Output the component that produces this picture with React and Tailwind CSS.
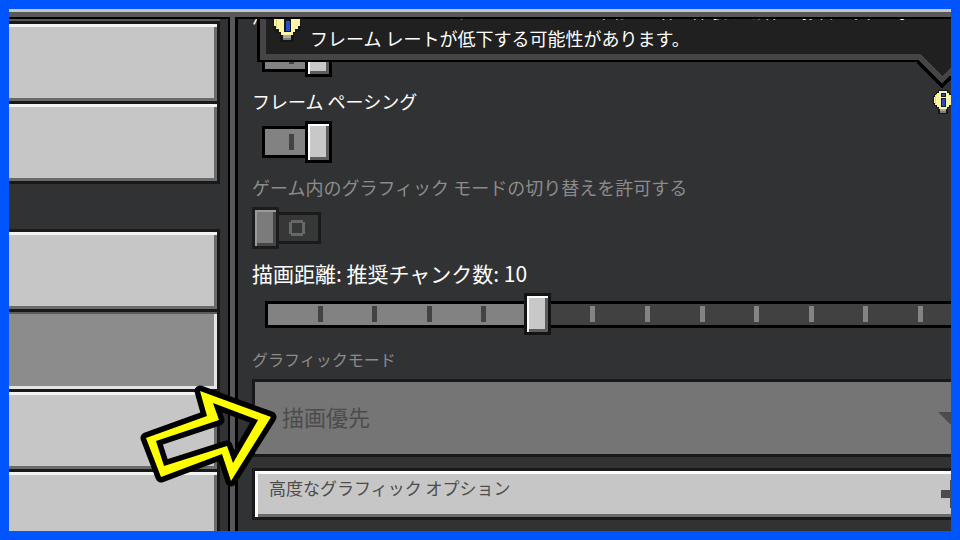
import { useState } from 'react';

const MENU_GROUPS = [
  [
    { id: 'general', selected: false },
    { id: 'account', selected: false },
  ],
  [
    { id: 'controls', selected: false },
    { id: 'video', selected: true },
    { id: 'audio', selected: false },
    { id: 'global', selected: false },
  ],
];

const STEPS = [1, 2, 3, 4, 5, 6, 7, 8, 9, 10, 11, 12];
const CURRENT_STEP = 5;

function BulbIcon({ className, viewBox = '0 0 20 24' }) {
  return (
    <svg viewBox={viewBox} className={className} shapeRendering="crispEdges" aria-hidden="true">
      <path d="M5 0h10v2h2v2h2v2h1v8h-1v2h-2v2h-2v6h-10v-6h-2v-2h-2v-2h-1v-8h1v-2h2v-2h2z" fill="#161616" />
      <path d="M6 1h8v2h2v2h2v2h1v6h-1v2h-2v2h-2v2h-8v-2h-2v-2h-2v-2h-1v-6h1v-2h2v-2h2z" fill="#fdf5a4" />
      <path d="M2 6h1v8h-1zM3 4h1v2h-1z" fill="#dfd67e" />
      <path d="M8 3h5v4h-5zM8 8h5v9h-5z" fill="#14181f" />
      <path d="M9 4h3v2h-3zM9 9h3v7h-3z" fill="#2350c8" />
      <path d="M7 19h6v2h-6z" fill="#a8a8a8" />
      <path d="M7 21h6v2h-6z" fill="#7c7c7c" />
    </svg>
  );
}

function MenuButton({ item }) {
  return (
    <button
      type="button"
      aria-label={item.id}
      className={`block h-20 w-full border-r-[3px] border-b-[3px] border-[#19191a] ${
        item.selected
          ? 'bg-[#8c8c8c] shadow-[inset_0_2px_#5b5b5c,inset_-3px_-3px_#e4e4e5]'
          : 'bg-[#c6c6c6] shadow-[inset_0_3px_#f4f3f4,inset_-3px_-3px_#6b6b6c]'
      }`}
    />
  );
}

function Toggle({ id, defaultChecked = false, disabled = false }) {
  const [on, setOn] = useState(defaultChecked);

  return (
    <div className="relative flex h-[42px] w-20 items-center">
      <input
        id={id}
        type="checkbox"
        checked={on}
        disabled={disabled}
        onChange={(e) => setOn(e.target.checked)}
        className="absolute inset-0 z-10 m-0 h-full w-full opacity-0"
      />
      <span
        className={`ml-[10px] flex h-8 w-[59px] items-center border-[3px] pl-6 ${
          on ? 'border-black bg-[#828282]' : 'border-[#191a19] bg-[#363737]'
        }`}
      >
        {on ? (
          <span className="h-4 w-[5px] bg-[#434343]" />
        ) : (
          <svg viewBox="0 0 16 16" className="h-4 w-4" shapeRendering="crispEdges" aria-hidden="true">
            <path d="M2 0h12v2h2v12h-2v2h-12v-2h-2v-12h2zM3 3v10h10v-10z" fill="#686868" fillRule="evenodd" />
          </svg>
        )}
      </span>
      <span
        className={`absolute top-0 h-[42px] w-[27px] border-[3px] ${
          on
            ? 'left-[53px] border-black bg-[#c8c8c8] shadow-[inset_2px_2px_#fff,inset_-3px_-3px_#5d5d5d]'
            : 'left-0 border-[#1b1c1b] bg-[#7a7b7a] shadow-[inset_2px_2px_#9b9b9b,inset_-3px_-3px_#464646]'
        }`}
      />
    </div>
  );
}

function RenderDistance() {
  return (
    <div className="relative ml-[13px] flex h-[42px] items-center">
      <input
        id="distance"
        type="range"
        min="0"
        max="25"
        defaultValue="10"
        className="absolute inset-0 z-20 m-0 h-full w-full opacity-0"
      />
      <div className="flex h-[27px] flex-1 border-y-[3px] border-l-[3px] border-black bg-[#414141] pr-7">
        {STEPS.map((step) => (
          <div
            key={step}
            className={`flex flex-1 items-center justify-end ${
              step === CURRENT_STEP ? 'relative z-10' : ''
            } ${step <= CURRENT_STEP ? 'bg-[#828282]' : 'bg-[#414141]'}`}
          >
            <span className={`h-4 w-[5px] ${step <= CURRENT_STEP ? 'bg-[#434343]' : 'bg-[#848484]'}`} />
            {step === CURRENT_STEP && (
              <span className="absolute -top-[11px] -right-[10px] h-[42px] w-[27px] border-[3px] border-[#141414] bg-[#c8c8c8] shadow-[inset_2px_2px_#fff,inset_-3px_-3px_#5d5d5d]" />
            )}
          </div>
        ))}
      </div>
    </div>
  );
}

function Tooltip() {
  return (
    <div
      role="tooltip"
      className="absolute -top-[23px] right-0 left-[19px] z-20 border-b-2 border-l-[3px] border-black"
    >
      <div className="flex gap-[9px] border-b-[6px] border-l-[6px] border-[#454546] bg-[#202021] pb-[2px] pl-[7px]">
        <BulbIcon className="mt-3 h-[34px] w-[28px] shrink-0" />
        <p className="text-[18px] leading-[28px] whitespace-nowrap text-white">
          フレーム ペーシングをオンにすると負担が増え体験や動作に影響が出る時
          <br />
          フレーム レートが低下する可能性があります。
        </p>
      </div>
      <svg
        viewBox="0 0 34 35"
        className="absolute top-[58px] right-0 h-[35px] w-[34px]"
        shapeRendering="crispEdges"
        aria-hidden="true"
      >
        <path d="M0 6L25 31L34 22V0H0z" fill="#454546" />
        <path d="M4 0L25 22L34 13V0z" fill="#202021" />
        <path d="M0 7L25 32L34 23" fill="none" stroke="#000" strokeWidth="3" />
      </svg>
    </div>
  );
}

function PointerArrow() {
  return (
    <svg
      viewBox="0 0 140 106"
      className="pointer-events-none absolute top-[373px] left-[129px] z-30 h-[106px] w-[140px]"
      aria-hidden="true"
    >
      <path
        d="M8 56L69 34L62 9L133 35L93 99L84 72L23 95ZM18 59L26 84L89 64L95 81L120 38L75 21L81 38Z"
        fill="#ffff00"
        fillRule="evenodd"
        stroke="#000"
        strokeWidth="11"
        strokeLinejoin="round"
        paintOrder="stroke"
      />
    </svg>
  );
}

export default function App() {
  return (
    <div className="relative flex h-screen flex-col overflow-hidden border-[9px] border-[#0055ff] bg-[#58585a] font-['Noto_Sans_CJK_JP','Noto_Sans',sans-serif]">
      <div className="h-[3px] shrink-0 bg-[#c6c6c6]" />
      <div className="h-[5px] shrink-0 bg-[#58585a]" />

      <div className="flex min-h-0 flex-1 gap-[5px]">
        <nav className="w-[221px] shrink-0 overflow-hidden border-t-2 border-r-2 border-black bg-[#313233] pr-2">
          <div className="h-[2px] bg-[#58585a]" />
          {MENU_GROUPS.map((group) => (
            <div key={group[0].id} className="mb-[45px] border-t-[3px] border-[#19191a]">
              {group.map((item) => (
                <MenuButton key={item.id} item={item} />
              ))}
            </div>
          ))}
        </nav>

        <main className="relative min-w-0 flex-1 overflow-hidden border-t-2 border-l-[3px] border-black bg-[#313233]">
          <Tooltip />

          <div className="-mt-[17px] flex flex-col gap-[11px] pl-[14px]">
            <div className="flex flex-col gap-[7px]">
              <label htmlFor="smooth" className="text-[18px] leading-[26px] text-white">
                滑らかな照明
              </label>
              <Toggle id="smooth" defaultChecked />
            </div>

            <div className="flex flex-col gap-[7px]">
              <div className="flex items-center justify-between">
                <label htmlFor="pacing" className="text-[18px] leading-[26px] text-white">
                  フレーム ペーシング
                </label>
                <BulbIcon viewBox="0 0 18 24" className="mt-[2px] h-6 w-[18px]" />
              </div>
              <Toggle id="pacing" defaultChecked />
            </div>

            <div className="flex flex-col gap-[7px]">
              <label htmlFor="switching" className="text-[18px] leading-[26px] text-[#8c8c8c]">
                ゲーム内のグラフィック モードの切り替えを許可する
              </label>
              <Toggle id="switching" disabled />
            </div>

            <div className="flex flex-col gap-[7px]">
              <label htmlFor="distance" className="text-[21px] leading-[26px] text-white">
                描画距離: 推奨チャンク数: 10
              </label>
              <RenderDistance />
            </div>

            <div className="flex flex-col gap-[7px]">
              <label htmlFor="mode" className="text-[16px] leading-[26px] text-[#8c8c8c]">
                グラフィックモード
              </label>
              <div className="relative">
                <select
                  id="mode"
                  disabled
                  className="block h-[78px] w-full appearance-none border-y-[3px] border-l-[3px] border-[#19191a] bg-[#757575] pb-1 pl-[27px] text-[22px] text-[#4c4c4c] opacity-100"
                >
                  <option>描画優先</option>
                </select>
                <svg
                  viewBox="0 0 13 12"
                  className="pointer-events-none absolute top-[33px] right-0 h-3 w-[13px]"
                  aria-hidden="true"
                >
                  <path d="M0 0h26L13 13z" fill="#4c4c4c" />
                </svg>
              </div>
            </div>

            <button
              type="button"
              className="flex h-[52px] w-full items-center justify-between border-y-[3px] border-l-[3px] border-[#19191a] bg-[#c6c6c6] pl-[14px] text-left text-[17px] text-[#4c4c4c] shadow-[inset_3px_3px_#fbfbfb,inset_0_-3px_#6b6b6c]"
            >
              <span className="pb-3">高度なグラフィック オプション</span>
              <svg viewBox="0 0 10 28" className="h-7 w-[10px]" shapeRendering="crispEdges" aria-hidden="true">
                <path d="M0 10h9v-10h8v28h-8v-10h-9z" fill="#4c4c4c" />
              </svg>
            </button>
          </div>
        </main>
      </div>

      <PointerArrow />
    </div>
  );
}
